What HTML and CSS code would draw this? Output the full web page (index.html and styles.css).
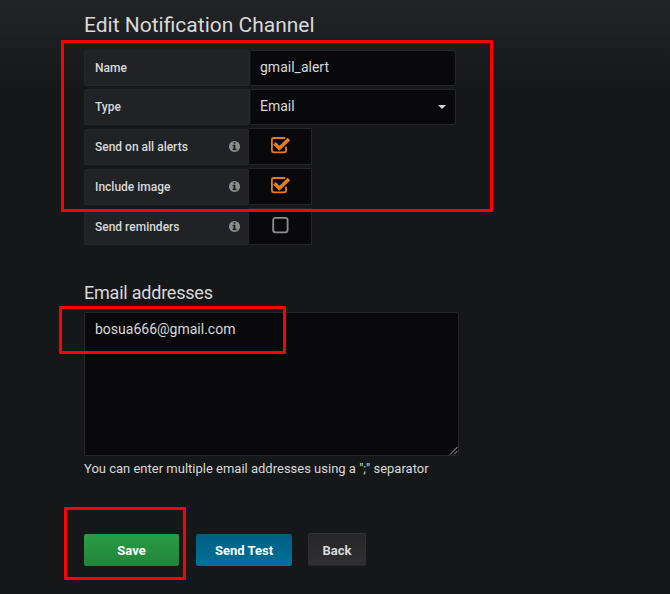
FILE: index.html
```html
<!DOCTYPE html>
<html lang="en">
<head>
<meta charset="utf-8">
<title>Edit Notification Channel</title>
<link rel="stylesheet" href="styles.css">
</head>
<body>
<svg class="defs" width="0" height="0" aria-hidden="true">
  <symbol id="info" viewBox="128 128 1536 1536"><path d="M1152 1376v-160q0-14-9-23t-23-9h-96v-512q0-14-9-23t-23-9h-320q-14 0-23 9t-9 23v160q0 14 9 23t23 9h96v320h-96q-14 0-23 9t-9 23v160q0 14 9 23t23 9h448q14 0 23-9t9-23zm-128-896v-160q0-14-9-23t-23-9h-192q-14 0-23 9t-9 23v160q0 14 9 23t23 9h192q14 0 23-9t9-23zm640 416q0 209-103 385.5t-279.5 279.5-385.5 103-385.5-103-279.5-279.5-103-385.5 103-385.5 279.5-279.5 385.5-103 385.5 103 279.5 279.5 103 385.5z"/></symbol>
  <symbol id="checked" viewBox="0 0 20 18"><path d="M14.5 2H4Q1.9 2 1.9 4.1V14.2Q1.9 16.3 4 16.3H14Q16.1 16.3 16.1 14.2V11.5" fill="none" stroke="currentColor" stroke-width="1.8" stroke-linecap="round"/><path d="M4.4 7.3L9.4 12.2L18.9 3" fill="none" stroke="currentColor" stroke-width="3.6"/></symbol>
  <symbol id="unchecked" viewBox="0 0 20 18"><rect x="3.2" y="1.9" width="14.4" height="14.4" rx="2.3" fill="none" stroke="currentColor" stroke-width="1.8"/></symbol>
</svg>
<main class="page">
  <h1 class="title">Edit Notification Channel</h1>
  <form class="form">
    <div class="row"><div class="label">Name</div><div class="input">gmail_alert</div></div>
    <div class="row"><div class="label">Type</div><div class="input">Email<span class="caret"></span></div></div>
    <div class="row switch-row"><div class="label">Send on all alerts<svg class="info"><use href="#info"/></svg></div><div class="switch on"><svg class="check"><use href="#checked"/></svg></div></div>
    <div class="row switch-row"><div class="label">Include image<svg class="info"><use href="#info"/></svg></div><div class="switch on"><svg class="check"><use href="#checked"/></svg></div></div>
    <div class="row switch-row"><div class="label">Send reminders<svg class="info"><use href="#info"/></svg></div><div class="switch"><svg class="check"><use href="#unchecked"/></svg></div></div>
  </form>
  <h2 class="subtitle">Email addresses</h2>
  <div class="textarea">bosua666@gmail.com<svg class="grip" viewBox="0 0 9 9"><path d="M1 8.5L8.5 1M5 8.5L8.5 5" stroke="#b5b5b5" stroke-width="1"/></svg></div>
  <p class="hint">You can enter multiple email addresses using a ";" separator</p>
  <div class="buttons">
    <div class="btn save">Save</div>
    <div class="btn test">Send Test</div>
    <div class="btn back">Back</div>
  </div>
</main>
<div class="mark mark-settings"></div>
<div class="mark mark-email"></div>
<div class="mark mark-save"></div>
</body>
</html>
```
FILE: styles.css
```css
* { box-sizing: border-box; }
body {
  margin: 0;
  height: 594px;
  overflow: hidden;
  background: #161719 linear-gradient(180deg, #222426 0, #161719 90px) no-repeat;
  color: #d8d9da;
  font: 14px/20px Roboto, sans-serif;
}
.defs { position: absolute; }
.page { padding: 10px 0 0 84px; }
.title { margin: 0; height: 40px; font-size: 21px; line-height: 30px; font-weight: 400; }
.form { display: flex; flex-direction: column; gap: 3px; }
.row { display: flex; height: 36px; }
.switch-row { height: 37px; align-items: flex-end; }
.label {
  display: flex;
  align-items: center;
  justify-content: space-between;
  width: 166px;
  height: 36px;
  padding: 0 9px 0 10px;
  background: #202226;
  border: 1px solid #262628;
  border-radius: 2px;
  font-size: 12px;
  font-weight: 500;
}
.switch-row .label { width: 165px; padding-right: 8px; }
.info { width: 11px; height: 11px; margin-bottom: 1px; fill: #8e8e8e; }
.input {
  display: flex;
  justify-content: space-between;
  width: 206px;
  height: 36px;
  padding: 6px 9px 0;
  background: #09090b;
  border: 1px solid #262628;
  border-left-color: #141416;
  border-radius: 0 3px 3px 0;
}
.caret {
  width: 8px;
  height: 4px;
  margin-top: 9px;
  border: 4px solid transparent;
  border-top-color: #d8d9da;
  border-bottom: 0;
}
.switch {
  width: 63px;
  height: 37px;
  padding: 7px 0 0 21px;
  background: #09090b;
  border: 1px solid #262628;
  border-left: 0;
  color: #8e8e8e;
}
.on { color: #eb7b18; }
.check { display: block; width: 20px; height: 18px; }
.subtitle { margin: 35px 0 0; height: 32px; font-size: 18px; line-height: 26px; font-weight: 400; letter-spacing: -0.22px; }
.textarea {
  position: relative;
  width: 375px;
  height: 144px;
  padding: 6px 10px;
  background: #09090b;
  border: 1px solid #262628;
  border-radius: 0 3px 3px 0;
}
.grip { position: absolute; right: 0; bottom: 0; width: 9px; height: 9px; }
.hint { margin: 3px 0 54px; font-size: 13px; line-height: 20px; }
.buttons { display: flex; align-items: flex-end; gap: 16px; height: 33px; }
.btn {
  height: 32px;
  border-radius: 2px;
  color: #fff;
  font-size: 13px;
  line-height: 34px;
  font-weight: 700;
  text-align: center;
}
.save { width: 95px; margin-right: 1px; background: linear-gradient(#299c46, #23843b); }
.test { width: 96px; background: linear-gradient(#005f81, #007099); }
.back { width: 58px; height: 33px; line-height: 33px; background: linear-gradient(#262628, #303032); border: 1px solid #303032; border-bottom-color: #29292b; color: #d8d9da; }
.mark { position: absolute; border: 3px solid #f00; border-radius: 1px; }
.mark-settings { left: 61px; top: 40px; width: 432px; height: 172px; }
.mark-email { left: 59px; top: 306px; width: 227px; height: 48px; }
.mark-save { left: 64px; top: 507px; width: 122px; height: 73px; }
```
